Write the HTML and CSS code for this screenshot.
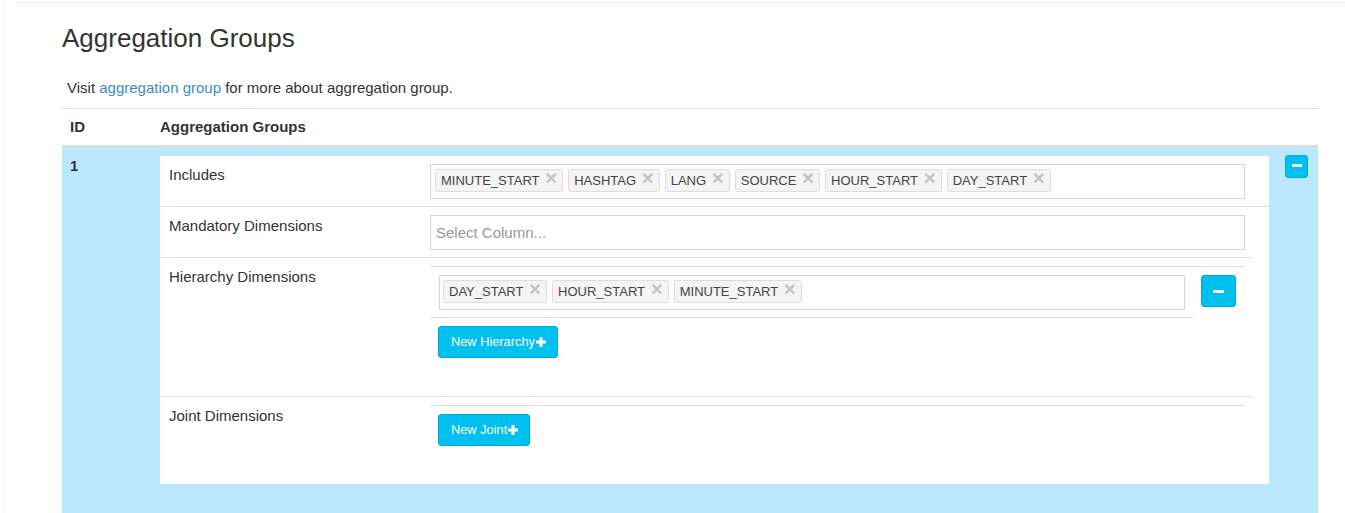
FILE: index.html
```html
<!DOCTYPE html>
<html>
<head>
<meta charset="utf-8">
<title>Aggregation Groups</title>
<link rel="stylesheet" href="styles.css">
</head>
<body>
<div class="page">
  <div class="topbar"></div>
  <div class="content">
    <h3 class="title">Aggregation Groups</h3>
    <p class="intro">Visit <a href="#" class="link">aggregation group</a> for more about aggregation group.</p>
    <div class="grid-table">
      <div class="thead">
        <div class="c-id">ID</div>
        <div class="c-main">Aggregation Groups</div>
        <div class="c-act"></div>
      </div>
      <div class="trow">
        <div class="c-id">1</div>
        <div class="c-main">
          <div class="panel">
            <div class="f-row">
              <div class="f-label">Includes</div>
              <div class="f-value">
                <div class="tag-input">
                  <span class="tag">MINUTE_START<span class="tag-x">&nbsp;×</span></span>
                  <span class="tag">HASHTAG<span class="tag-x">&nbsp;×</span></span>
                  <span class="tag">LANG<span class="tag-x">&nbsp;×</span></span>
                  <span class="tag">SOURCE<span class="tag-x">&nbsp;×</span></span>
                  <span class="tag">HOUR_START<span class="tag-x">&nbsp;×</span></span>
                  <span class="tag">DAY_START<span class="tag-x">&nbsp;×</span></span>
                </div>
              </div>
            </div>
            <div class="f-rest">
              <div class="f-row">
                <div class="f-label">Mandatory Dimensions</div>
                <div class="f-value">
                  <div class="tag-input placeholder">Select Column...</div>
                </div>
              </div>
              <div class="f-row">
                <div class="f-label">Hierarchy Dimensions</div>
                <div class="f-value f-value-list">
                  <div class="sub-table">
                    <div class="sub-row">
                      <div class="sub-cell-main">
                        <div class="tag-input">
                          <span class="tag">DAY_START<span class="tag-x">&nbsp;×</span></span>
                          <span class="tag">HOUR_START<span class="tag-x">&nbsp;×</span></span>
                          <span class="tag">MINUTE_START<span class="tag-x">&nbsp;×</span></span>
                        </div>
                      </div>
                      <div class="sub-cell-act">
                        <button class="btn-info btn-minus-lg" type="button"><svg class="ico-minus-lg" width="11" height="3" viewBox="0 0 11 3"><rect x="0" y="0" width="11" height="3" fill="#fff"/></svg></button>
                      </div>
                    </div>
                  </div>
                  <div class="add-wrap">
                    <button class="btn-info btn-add" type="button">New Hierarchy<svg class="ico-plus" width="10" height="10" viewBox="0 0 10 10"><path d="M3.5 0h3v3.5H10v3H6.5V10h-3V6.5H0v-3h3.5z" fill="#fff"/></svg></button>
                  </div>
                </div>
              </div>
              <div class="f-row f-row-last">
                <div class="f-label">Joint Dimensions</div>
                <div class="f-value f-value-list">
                  <div class="sub-table"></div>
                  <div class="add-wrap">
                    <button class="btn-info btn-add" type="button">New Joint<svg class="ico-plus" width="10" height="10" viewBox="0 0 10 10"><path d="M3.5 0h3v3.5H10v3H6.5V10h-3V6.5H0v-3h3.5z" fill="#fff"/></svg></button>
                  </div>
                </div>
              </div>
            </div>
          </div>
        </div>
        <div class="c-act">
          <button class="btn-info btn-minus-sm" type="button"><svg class="ico-minus-sm" width="10" height="3" viewBox="0 0 10 3"><rect x="0" y="0" width="10" height="3" fill="#fff"/></svg></button>
        </div>
      </div>
    </div>
  </div>
</div>
</body>
</html>
```
FILE: styles.css
```css
* {
  box-sizing: border-box;
}

html, body {
  margin: 0;
  padding: 0;
  background: #fff;
}

body {
  font-family: "Liberation Sans", Arial, Helvetica, sans-serif;
  font-size: 15px;
  line-height: 21px;
  color: #333;
}

.page {
  margin-left: 4px;
  border-left: 1px solid #f2f2f2;
  height: 513px;
  overflow: hidden;
}

.topbar {
  margin: 2px 0 0 11px;
  border-top: 1px solid #ebebeb;
}

.content {
  padding-left: 57px;
}

.title {
  margin: 21px 0 0;
  font-size: 26px;
  line-height: 28px;
  font-weight: normal;
  color: #333;
}

.intro {
  margin: 25px 0 0;
  padding-left: 5px;
}

.link {
  color: #3c8dbc;
  text-decoration: none;
}

.grid-table {
  margin-top: 10px;
  width: 1256px;
}

.thead {
  display: flex;
  border-top: 1px solid #ddd;
  border-bottom: 2px solid #ddd;
  font-weight: bold;
}

.thead > div {
  padding: 7px 8px;
  line-height: 22px;
}

.c-id {
  width: 90px;
  flex: none;
}

.c-main {
  width: 1125px;
  flex: none;
}

.c-act {
  width: 41px;
  flex: none;
}

.trow {
  display: flex;
  background: #bce8fd;
  padding-bottom: 40px;
}

.trow .c-id {
  padding: 8px 8px 0;
  font-weight: bold;
}

.trow .c-main {
  padding: 9px 8px 0;
}

.trow .c-act {
  padding: 8px 0 0 8px;
}

.panel {
  background: #fff;
  width: 1109px;
}

.f-rest {
  width: 1092px;
}

.f-row {
  display: flex;
  border-bottom: 1px solid #ddd;
}

.f-row-last {
  border-bottom: none;
}

.f-label {
  width: 262px;
  flex: none;
  padding: 8px 0 0 9px;
}

.f-value {
  width: 823px;
  flex: none;
  padding: 8px 0 7px 8px;
}

.f-value-list {
  padding-bottom: 0;
}

.tag-input {
  width: 815px;
  height: 35px;
  border: 1px solid #d2d6de;
  padding: 4px 4px 0;
  display: flex;
  flex-wrap: wrap;
  align-items: flex-start;
  gap: 5px;
  background: #fff;
}

.sub-cell-main .tag-input {
  width: 746px;
  padding-left: 3px;
}

.placeholder {
  color: #999;
  padding: 0 5px;
  align-items: center;
}

.tag {
  display: inline-flex;
  align-items: baseline;
  height: 23px;
  padding: 1px 5px;
  border: 1px solid #ddd;
  border-radius: 3px;
  background: #f4f4f4;
  color: #444;
  font-size: 13px;
  line-height: 19px;
  white-space: nowrap;
}

.tag-x {
  font-size: 20.5px;
  font-weight: bold;
  line-height: 14px;
  color: #c3c3c3;
}

.sub-table {
  width: 815px;
  border-top: 1px solid #ddd;
}

.sub-row {
  display: flex;
}

.sub-cell-main {
  width: 763px;
  flex: none;
  padding: 8px 8px 7px 9px;
  border-bottom: 1px solid #ddd;
}

.sub-cell-act {
  width: 52px;
  flex: none;
  padding: 8px;
}

.add-wrap {
  padding: 8px 8px 38px;
}

.btn-info {
  background: #00c0ef;
  border: 1px solid #00acd6;
  border-radius: 3px;
  color: #fff;
  font-family: inherit;
  margin: 0;
  padding: 0;
  cursor: pointer;
}

.btn-add {
  display: inline-flex;
  align-items: center;
  height: 32px;
  padding: 0 11px 0 12px;
  font-size: 12.8px;
  line-height: 20px;
}

.ico-plus {
  display: block;
  margin-left: 1px;
}

.btn-minus-lg {
  width: 35px;
  height: 32px;
  display: flex;
  align-items: center;
  justify-content: center;
}

.btn-minus-sm {
  width: 23px;
  height: 23px;
  display: flex;
  align-items: center;
  justify-content: center;
}

.ico-minus-sm {
  display: block;
  margin-top: -2px;
}

.ico-minus-lg {
  display: block;
}
```
